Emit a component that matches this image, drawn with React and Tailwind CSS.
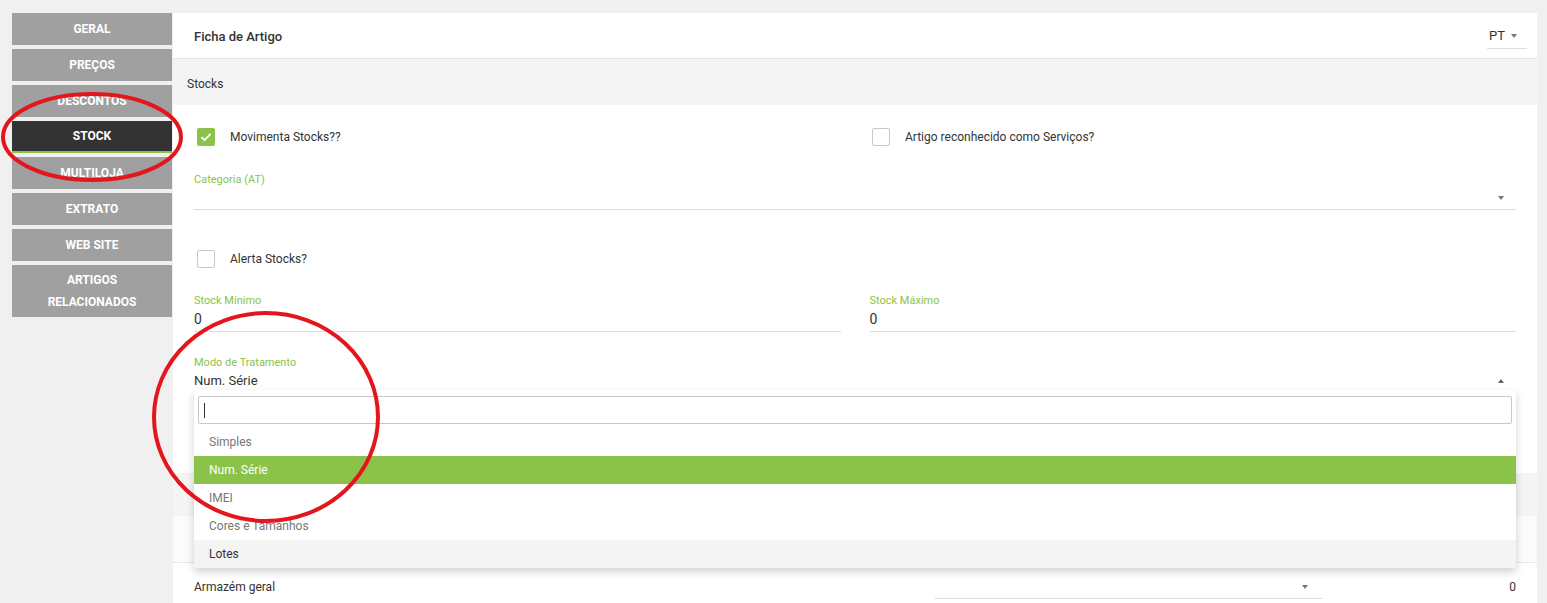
import React from 'react';

const tabs = ['GERAL', 'PREÇOS', 'DESCONTOS', 'STOCK', 'MULTILOJA', 'EXTRATO', 'WEB SITE'];

const options = [
  { label: 'Simples', cls: 'text-[#777]' },
  { label: 'Num. Série', cls: 'bg-[#8bc34a] text-white' },
  { label: 'IMEI', cls: 'text-[#777]' },
  { label: 'Cores e Tamanhos', cls: 'text-[#777]' },
  { label: 'Lotes', cls: 'bg-[#f4f4f4] text-[#333]' },
];

function Caret({ up }) {
  return up ? (
    <span className="inline-block w-0 h-0 border-x-[3px] border-x-transparent border-b-[4px] border-b-[#666]" />
  ) : (
    <span className="inline-block w-0 h-0 border-x-[3px] border-x-transparent border-t-[4px] border-t-[#777]" />
  );
}

function Checkbox({ checked }) {
  if (checked) {
    return (
      <span className="w-[18px] h-[18px] rounded-[2px] bg-[#8bc34a] flex items-center justify-center">
        <svg width="12" height="10" viewBox="0 0 12 10">
          <path d="M1.5 5.2 L4.6 8.2 L10.5 1.8" fill="none" stroke="#fff" strokeWidth="1.8" />
        </svg>
      </span>
    );
  }
  return <span className="w-[18px] h-[18px] rounded-[2px] border border-[#c8c8c8] bg-white" />;
}

export default function App() {
  return (
    <div
      className="relative h-[603px] overflow-hidden bg-[#f0f0f0] pt-[13px] pl-[12px] pr-[10px] text-[#333]"
      style={{ fontFamily: 'Roboto, "Liberation Sans", sans-serif' }}
    >
      <div className="flex gap-[1px] items-start">
        {/* sidebar */}
        <div className="w-[160px] flex flex-col gap-[4px] shrink-0">
          {tabs.map((t) =>
            t === 'STOCK' ? (
              <div
                key={t}
                className="h-[32px] bg-[#333] border-b-[2px] border-[#8bc34a] flex items-center justify-center text-white text-[12px] font-bold"
              >
                {t}
              </div>
            ) : (
              <div
                key={t}
                className="h-[32px] bg-[#a0a0a0] flex items-center justify-center text-white text-[12px] font-bold"
              >
                {t}
              </div>
            )
          )}
          <div className="h-[52px] bg-[#a0a0a0] flex flex-col items-center justify-center text-white text-[12px] font-bold leading-[22px]">
            <span>ARTIGOS</span>
            <span>RELACIONADOS</span>
          </div>
        </div>

        {/* main panel */}
        <div className="flex-1 bg-white h-[600px]">
          <div className="h-[46px] border-b border-[#e6e6e6] flex items-center justify-between pl-[21px] pr-[10px] pt-[2px]">
            <span className="text-[13px] font-medium">Ficha de Artigo</span>
            <div className="w-[40px] h-[24px] border-b border-[#ddd] flex items-center gap-[6px] pl-[2px] text-[13px]">
              PT <Caret />
            </div>
          </div>
          <div className="h-[46px] bg-[#f4f4f4] flex items-center pl-[14px] pt-[3px] text-[12px]">Stocks</div>

          <div className="px-[21px] pb-[81px]">
            <div className="h-[64px] flex items-center">
              <div className="w-[678px] flex items-center gap-[15px] pl-[3px]">
                <Checkbox checked />
                <span className="text-[12px]">Movimenta Stocks??</span>
              </div>
              <div className="flex items-center gap-[15px]">
                <Checkbox />
                <span className="text-[12px]">Artigo reconhecido como Serviços?</span>
              </div>
            </div>

            <div className="pt-[4px]">
              <div className="h-[14px] leading-[14px] text-[11px] text-[#8bc34a]">Categoria (AT)</div>
              <div className="h-[23px] border-b border-[#ddd] flex items-center justify-end pr-[12px]">
                <Caret />
              </div>
            </div>

            <div className="mt-[34px] h-[30px] flex items-center gap-[15px] pl-[3px]">
              <Checkbox />
              <span className="text-[12px]">Alerta Stocks?</span>
            </div>

            <div className="mt-[20px] grid grid-cols-2 gap-x-[29px]">
              <div>
                <div className="h-[14px] leading-[14px] text-[11px] text-[#8bc34a]">Stock Mínimo</div>
                <div className="h-[24px] border-b border-[#ddd] flex items-center text-[14px]">0</div>
              </div>
              <div>
                <div className="h-[14px] leading-[14px] text-[11px] text-[#8bc34a]">Stock Máximo</div>
                <div className="h-[24px] border-b border-[#ddd] flex items-center text-[14px]">0</div>
              </div>
            </div>

            <div className="mt-[24px] relative">
              <div className="h-[14px] leading-[14px] text-[11px] text-[#8bc34a]">Modo de Tratamento</div>
              <div className="h-[22px] border-b border-[#ddd] flex items-center justify-between pr-[12px] text-[13px]">
                <span>Num. Série</span>
                <Caret up />
              </div>

              <div className="absolute left-0 right-0 top-[34px] z-10 bg-white shadow-[0_4px_8px_rgba(0,0,0,0.18)]">
                <div className="px-[4px] pt-[6px] pb-[4px]">
                  <div className="h-[28px] border border-[#c8c8c8] rounded-[2px] flex items-center pl-[5px]">
                    <span className="w-[1px] h-[15px] bg-[#333]" />
                  </div>
                </div>
                {options.map((o) => (
                  <div key={o.label} className={`h-[28px] flex items-center pl-[15px] text-[12px] ${o.cls}`}>
                    {o.label}
                  </div>
                ))}
              </div>
            </div>
          </div>

          <div className="h-[43px] bg-[#f4f4f4]" />
          <div className="h-[47px] bg-[#fbfbfb] border-b border-[#e6e6e6]" />
          <div className="h-[48px] flex items-center px-[21px] text-[12px]">
            <span className="w-[741px]">Armazém geral</span>
            <div className="w-[387px] h-[24px] border-b border-[#ddd] flex items-center justify-end pr-[14px] mt-[12px] self-start">
              <Caret />
            </div>
            <span className="flex-1 text-right">0</span>
          </div>
        </div>
      </div>

      {/* annotation ellipses */}
      <svg className="absolute inset-0 z-20 pointer-events-none" width="1547" height="603">
        <ellipse cx="92" cy="137" rx="89" ry="43" fill="none" stroke="#e3161d" strokeWidth="4" />
        <ellipse cx="266" cy="417" rx="112" ry="104" fill="none" stroke="#e3161d" strokeWidth="4" />
      </svg>
    </div>
  );
}
